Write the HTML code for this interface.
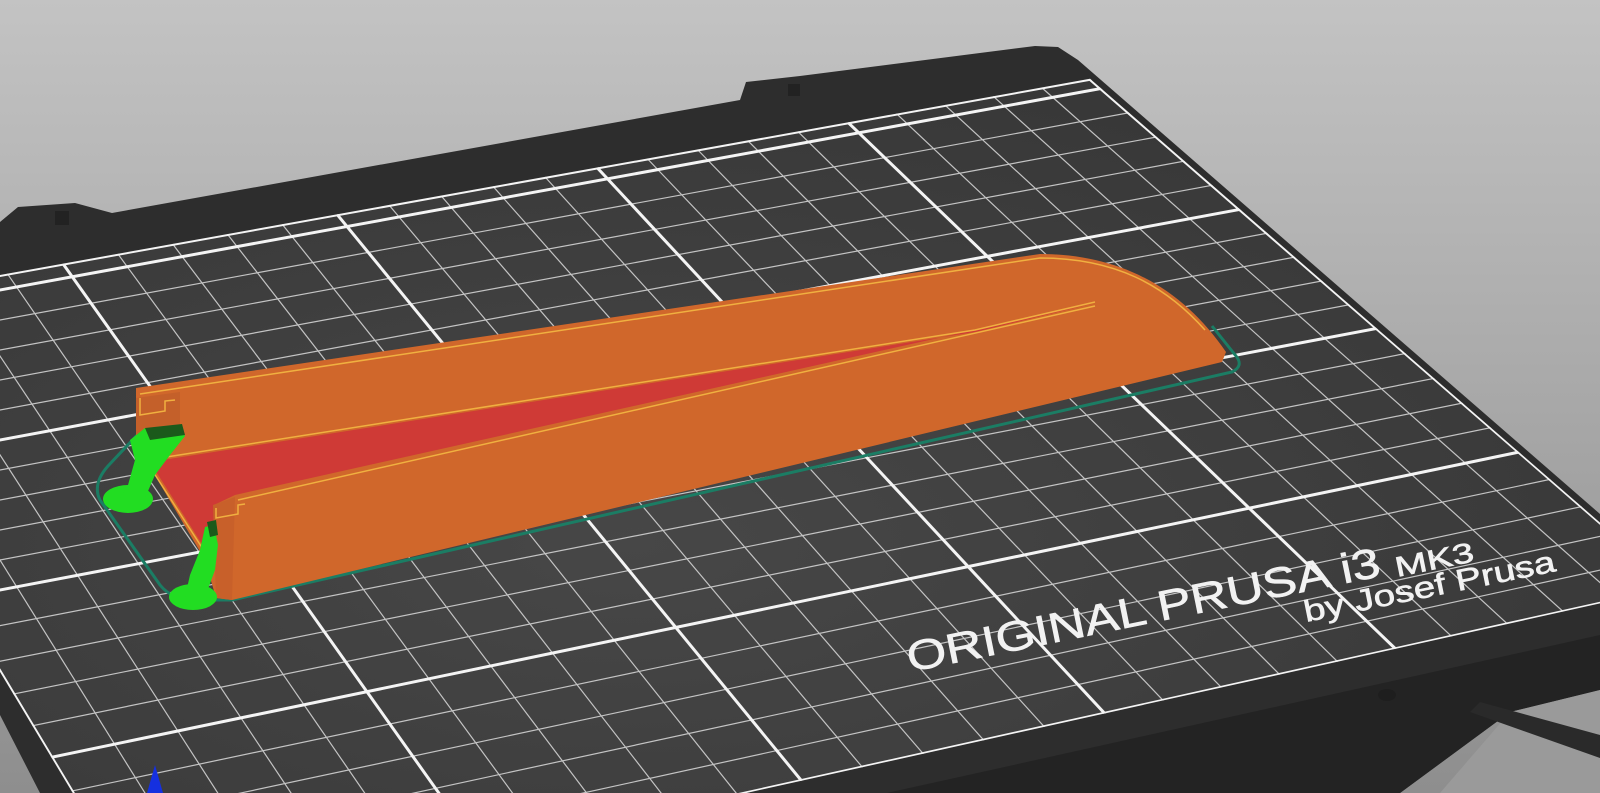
<!DOCTYPE html>
<html><head><meta charset="utf-8"><style>
html,body{margin:0;padding:0;width:1600px;height:793px;overflow:hidden;background:#aaa}
svg{display:block}
</style></head><body>
<svg width="1600" height="793" viewBox="0 0 1600 793" xmlns="http://www.w3.org/2000/svg">
<defs>
<linearGradient id="bg" x1="0" y1="0" x2="0" y2="1"><stop offset="0" stop-color="#c3c3c3"/><stop offset="1" stop-color="#8e8e8e"/></linearGradient>
<radialGradient id="gl" cx="0.45" cy="0.55" r="0.65"><stop offset="0" stop-color="#474747"/><stop offset="1" stop-color="#363636"/></radialGradient>
<clipPath id="gc"><polygon points="-215,313.7 1090,78.8 1674,587 152,925"/></clipPath>
</defs>
<rect width="1600" height="793" fill="url(#bg)"/>
<polygon fill="#2d2d2d" points="0,222 18,207 75,203 112,213 740,100 746,82 800,76 1035,46 1058,47 1078,60 1600,514 1600,690 1510,712 1400,793 40,793 0,715"/>
<polygon fill="#232323" points="887,793 1600,635 1600,690 1510,712 1400,793"/>
<polygon fill="#9a9a9a" points="1510,712 1600,690 1600,793 1440,793"/>
<polygon fill="#2a2a2a" points="1480,702 1600,735 1600,758 1470,712"/>
<rect x="55" y="211" width="14" height="14" fill="#222"/>
<rect x="788" y="84" width="12" height="12" fill="#222"/>
<ellipse cx="1387" cy="695" rx="9" ry="6" fill="#1e1e1e"/>
<polygon fill="url(#gl)" points="-215,313.7 1090,78.8 1674,587 152,925"/>
<g clip-path="url(#gc)" stroke="#c4c4c4" stroke-width="1.2">
<line x1="-159.4" y1="303.7" x2="242.6" y2="950"/>
<line x1="-103.8" y1="293.7" x2="318.9" y2="950"/>
<line x1="-48.2" y1="283.7" x2="395.6" y2="950"/>
<line x1="7.4" y1="273.7" x2="472.7" y2="950"/>
<line x1="117.8" y1="253.8" x2="627.4" y2="950"/>
<line x1="172.6" y1="243.9" x2="705" y2="950"/>
<line x1="227.4" y1="234.1" x2="782.9" y2="950"/>
<line x1="282.2" y1="224.2" x2="861.4" y2="950"/>
<line x1="389" y1="205" x2="1016.3" y2="950"/>
<line x1="441" y1="195.6" x2="1092.8" y2="950"/>
<line x1="493" y1="186.3" x2="1169.6" y2="950"/>
<line x1="545" y1="176.9" x2="1247" y2="950"/>
<line x1="647.2" y1="158.5" x2="1400.7" y2="950"/>
<line x1="697.4" y1="149.5" x2="1477.1" y2="950"/>
<line x1="747.6" y1="140.4" x2="1554" y2="950"/>
<line x1="797.8" y1="131.4" x2="1631.1" y2="950"/>
<line x1="896.4" y1="113.6" x2="1784.6" y2="950"/>
<line x1="944.8" y1="104.9" x2="1860.9" y2="950"/>
<line x1="993.2" y1="96.2" x2="1937.5" y2="950"/>
<line x1="1041.6" y1="87.5" x2="2014.5" y2="950"/>
<line x1="-300" y1="375.1" x2="1700" y2="7.9"/>
<line x1="-300" y1="405.3" x2="1700" y2="36.9"/>
<line x1="-300" y1="435.4" x2="1700" y2="65.8"/>
<line x1="-300" y1="465.6" x2="1700" y2="94.8"/>
<line x1="-300" y1="526" x2="1700" y2="152.4"/>
<line x1="-300" y1="556.3" x2="1700" y2="181.1"/>
<line x1="-300" y1="586.5" x2="1700" y2="209.7"/>
<line x1="-300" y1="616.8" x2="1700" y2="238.4"/>
<line x1="-300" y1="683.7" x2="1700" y2="296.5"/>
<line x1="-300" y1="720.4" x2="1700" y2="325.9"/>
<line x1="-300" y1="757" x2="1700" y2="355.4"/>
<line x1="-300" y1="793.7" x2="1700" y2="384.9"/>
<line x1="-300" y1="869.4" x2="1700" y2="447.8"/>
<line x1="-300" y1="908.5" x2="1700" y2="481.3"/>
<line x1="-300" y1="947.5" x2="1700" y2="514.7"/>
<line x1="-300" y1="986.6" x2="1700" y2="548.2"/>
</g>
<g clip-path="url(#gc)" stroke="#f4f4f4" stroke-width="3">
<line x1="-215" y1="313.7" x2="166.8" y2="950" stroke-width="4"/>
<line x1="63" y1="263.7" x2="550.3" y2="950"/>
<line x1="337" y1="214.3" x2="940.3" y2="950"/>
<line x1="597" y1="167.5" x2="1324.7" y2="950"/>
<line x1="848" y1="122.4" x2="1708.7" y2="950"/>
<line x1="1090" y1="78.8" x2="2092" y2="950" stroke-width="4"/>
<line x1="-300" y1="329" x2="1700" y2="-31" stroke-width="4"/>
<line x1="-300" y1="344.9" x2="1700" y2="-21.1"/>
<line x1="-300" y1="495.8" x2="1700" y2="123.8"/>
<line x1="-300" y1="647" x2="1700" y2="267"/>
<line x1="-300" y1="830.4" x2="1700" y2="414.4"/>
<line x1="-300" y1="1025.6" x2="1700" y2="581.6" stroke-width="4"/>
</g>
<g fill="#f2f2f2" stroke="#f2f2f2" stroke-width="0.6" font-family="Liberation Sans, sans-serif">
<text transform="translate(910,672) rotate(-11.5)" font-size="42" textLength="482" lengthAdjust="spacingAndGlyphs">ORIGINAL PRUSA i3</text>
<text transform="translate(1397,577) rotate(-11.5)" font-size="28" textLength="80" lengthAdjust="spacingAndGlyphs">MK3</text>
<text transform="translate(1306,622) rotate(-11.5)" font-size="30" textLength="256" lengthAdjust="spacingAndGlyphs">by Josef Prusa</text>
</g>
<path d="M140,432 L108,466 Q92,484 100,500 L160,585 Q172,600 195,600 L232,600 L1232,372 Q1244,366 1236,356 L1212,326" fill="none" stroke="#1b7d64" stroke-width="3"/>
<path d="M136,388 L1040,254 C1125,254 1185,292 1226,352 L1222,362 L232,600 L216,598 L205,560 L150,467 L136,440 Z" fill="#d0672b"/>
<polygon fill="#cf3a36" points="150,462 975,332 1095,303 235,495 214,505 212,560"/>
<polygon fill="#c8602a" points="213,505 235,497 232,600 216,598"/>
<polygon fill="#c4602a" points="136,398 180,392 180,440 150,465 136,440"/>
<path d="M140,394 L1040,258 C1115,258 1165,285 1205,330" fill="none" stroke="#f0b040" stroke-width="1.5"/>
<path d="M160,458 L975,330 L1095,302" fill="none" stroke="#f0b040" stroke-width="1.5"/>
<path d="M238,500 L1095,306" fill="none" stroke="#f0b040" stroke-width="1.5"/>
<path d="M150,467 L210,560" fill="none" stroke="#f0b040" stroke-width="1.5"/>
<path d="M140,398 L140,415 L165,411 L165,401 L175,400" fill="none" stroke="#f0b040" stroke-width="1.5"/>
<path d="M216,508 L216,518 L238,514 L238,505 L245,504" fill="none" stroke="#f0b040" stroke-width="1.5"/>
<g fill="#22dd22">
<ellipse cx="128" cy="499" rx="25" ry="14"/>
<path d="M120,498 L145,498 L155,475 L170,455 L185,436 L180,428 L145,428 L130,440 L135,460 L128,485 Z"/>
<ellipse cx="193" cy="597" rx="24" ry="13"/>
<path d="M185,597 L205,597 L215,570 L218,545 L214,525 L205,527 L200,550 L190,575 Z"/>
</g>
<polygon fill="#1b5a1b" points="145,428 182,424 185,435 150,440"/>
<polygon fill="#1b5a1b" points="207,522 216,520 218,535 210,537"/>
<polygon fill="#1530e0" points="155,765 163,793 147,793"/>
</svg>
</body></html>
